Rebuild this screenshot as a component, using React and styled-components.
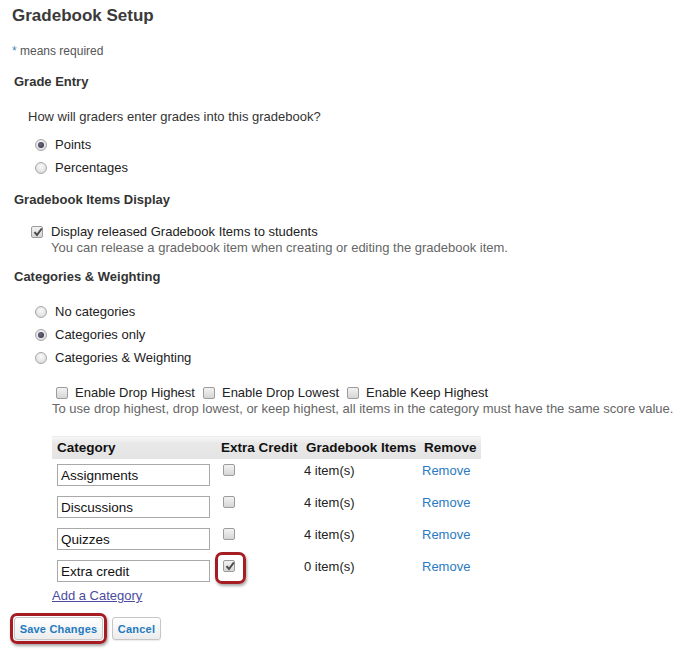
import React from "react";
import styled, { createGlobalStyle, css } from "styled-components";

const Global = createGlobalStyle`
  html, body { margin: 0; padding: 0; background: #fff; }
  body { font-family: "Liberation Sans", Arial, sans-serif; font-size: 13px; color: #222; }
`;

const Page = styled.div`
  width: 690px;
  height: 657px;
  padding: 6px 0 0 12px;
  box-sizing: border-box;
  overflow: hidden;
`;

const Title = styled.h1`
  margin: 0;
  font-size: 17px;
  line-height: 20px;
  font-weight: bold;
  color: #3a3a3a;
`;

const Required = styled.div`
  margin-top: 17px;
  font-size: 12px;
  line-height: 16px;
  color: #555;
`;

const Star = styled.span`
  color: #4a86b8;
`;

const SectionTitle = styled.h2`
  margin: ${(p) => p.$mt}px 0 0 2px;
  font-size: 13px;
  line-height: 16px;
  font-weight: bold;
  color: #333;
`;

const Prompt = styled.div`
  margin: 19px 0 0 16px;
  line-height: 16px;
  color: #333;
`;

const OptionList = styled.div`
  display: flex;
  flex-direction: column;
  gap: 7px;
  margin: ${(p) => p.$mt}px 0 0 23px;
`;

const OptionRow = styled.label`
  display: flex;
  align-items: center;
  gap: 8px;
  line-height: 16px;
  color: #222;
`;

const boxBase = css`
  display: inline-block;
  box-sizing: border-box;
  width: 12px;
  height: 12px;
  flex: none;
  border: 1px solid #9c9c9c;
  background: linear-gradient(#f2f2f2, #d6d6d6);
  position: relative;
`;

const RadioDot = styled.span`
  ${boxBase};
  border-radius: 50%;
  border-color: #a8a8a8;
  background: radial-gradient(circle at 50% 35%, #fafafa, #d4d4d4);
  &::after {
    content: "";
    display: ${(p) => (p.$on ? "block" : "none")};
    position: absolute;
    left: 2px;
    top: 2px;
    width: 6px;
    height: 6px;
    border-radius: 50%;
    background: radial-gradient(circle at 40% 40%, #6a6a80, #2d2d44);
  }
`;

const Box = styled.span`
  ${boxBase};
  border-radius: 2px;
  svg {
    position: absolute;
    left: 1px;
    top: 0px;
  }
`;

const Check = ({ on }) => (
  <Box>
    {on && (
      <svg width="10" height="10" viewBox="0 0 10 10">
        <path d="M1.5 5.2 L4 8 L8.8 1.5" fill="none" stroke="#4a4a4a" strokeWidth="2" />
      </svg>
    )}
  </Box>
);

const Radio = ({ on, children }) => (
  <OptionRow>
    <RadioDot $on={on} />
    <span>{children}</span>
  </OptionRow>
);

const DisplayBlock = styled.div`
  display: flex;
  align-items: flex-start;
  gap: 8px;
  margin: 16px 0 0 19px;
  line-height: 16px;
  & > span:first-child { margin-top: 2px; }
`;

const Hint = styled.div`
  color: #666;
  line-height: 16px;
`;

const DropBlock = styled.div`
  margin: 19px 0 0 40px;
  line-height: 16px;
`;

const DropRow = styled.div`
  display: flex;
  align-items: center;
  margin-left: 4px;
`;

const DropItem = styled.label`
  display: flex;
  align-items: center;
  gap: 7px;
  margin-right: 8px;
  color: #222;
`;

const Table = styled.div`
  margin: 19px 0 0 40px;
  width: 429px;
  display: grid;
  grid-template-columns: 167px 83px 118px 61px;
`;

const Head = styled.div`
  height: 22px;
  line-height: 22px;
  padding-left: ${(p) => p.$pl}px;
  font-weight: bold;
  font-size: 13.5px;
  color: #111;
  background: linear-gradient(#f6f6f6, #e8e8e8 30%, #e4e4e4);
  border-top: 1px solid #ececec;
  white-space: nowrap;
`;

const Cell = styled.div`
  height: 32px;
  box-sizing: border-box;
  padding: 5px 0 0 ${(p) => p.$pl}px;
  line-height: 14px;
  color: #222;
  white-space: nowrap;
`;

const TextInput = styled.div`
  box-sizing: border-box;
  width: 153px;
  height: 22px;
  border: 1px solid #a9a9a9;
  padding: 0 3px;
  line-height: 22px;
  font-size: 13.5px;
  color: #111;
`;

const Link = styled.a`
  color: ${(p) => p.$color};
  text-decoration: ${(p) => (p.$underline ? "underline" : "none")};
  cursor: pointer;
`;

const Ring = styled.span`
  position: relative;
  display: inline-block;
  &::after {
    content: "";
    position: absolute;
    left: -8px;
    top: -8px;
    right: -11px;
    bottom: -9px;
    border: 3px solid #a51d22;
    border-radius: 7px;
    box-shadow: 1px 2px 3px rgba(0, 0, 0, 0.35);
  }
`;

const AddLink = styled.div`
  margin: 1px 0 0 40px;
  line-height: 16px;
  font-size: 13px;
`;

const Actions = styled.div`
  display: flex;
  align-items: center;
  gap: 9px;
  margin: 13px 0 0 2px;
`;

const HighlightWrap = styled.div`
  padding: 1px;
  border: 3px solid #a51d22;
  border-radius: 7px;
  margin: -4px;
  box-shadow: 1px 2px 3px rgba(0, 0, 0, 0.35);
`;

const Button = styled.button`
  height: 23px;
  padding: 0 4px;
  font-family: "Liberation Sans", Arial, sans-serif;
  font-size: 11px;
  font-weight: bold;
  letter-spacing: 0.2px;
  color: #1f7ac0;
  background: linear-gradient(#ffffff, #ececec);
  border: 1px solid #c6c6c6;
  border-radius: 3px;
  box-shadow: 0 1px 1px rgba(0,0,0,0.08);
  width: ${(p) => p.$w}px;
`;

const rows = [
  { name: "Assignments", extra: false, items: 4 },
  { name: "Discussions", extra: false, items: 4 },
  { name: "Quizzes", extra: false, items: 4 },
  { name: "Extra credit", extra: true, items: 0 },
];

export default function App() {
  return (
    <>
      <Global />
      <Page>
        <Title>Gradebook Setup</Title>
        <Required>
          <Star>*</Star> means required
        </Required>

        <SectionTitle $mt={15}>Grade Entry</SectionTitle>
        <Prompt>How will graders enter grades into this gradebook?</Prompt>
        <OptionList $mt={12}>
          <Radio on>Points</Radio>
          <Radio>Percentages</Radio>
        </OptionList>

        <SectionTitle $mt={16}>Gradebook Items Display</SectionTitle>
        <DisplayBlock>
          <Check on />
          <div>
            <div>Display released Gradebook Items to students</div>
            <Hint>You can release a gradebook item when creating or editing the gradebook item.</Hint>
          </div>
        </DisplayBlock>

        <SectionTitle $mt={13}>Categories &amp; Weighting</SectionTitle>
        <OptionList $mt={19}>
          <Radio>No categories</Radio>
          <Radio on>Categories only</Radio>
          <Radio>Categories &amp; Weighting</Radio>
        </OptionList>

        <DropBlock>
          <DropRow>
            <DropItem><Check /><span>Enable Drop Highest</span></DropItem>
            <DropItem><Check /><span>Enable Drop Lowest</span></DropItem>
            <DropItem><Check /><span>Enable Keep Highest</span></DropItem>
          </DropRow>
          <Hint>To use drop highest, drop lowest, or keep highest, all items in the category must have the same score value.</Hint>
        </DropBlock>

        <Table>
          <Head $pl={5}>Category</Head>
          <Head $pl={2}>Extra Credit</Head>
          <Head $pl={4}>Gradebook Items</Head>
          <Head $pl={4}>Remove</Head>
          {rows.map((r) => (
            <React.Fragment key={r.name}>
              <Cell $pl={5}><TextInput>{r.name}</TextInput></Cell>
              <Cell $pl={4}>
                {r.extra ? (
                  <Ring><Check on /></Ring>
                ) : (
                  <Check />
                )}
              </Cell>
              <Cell $pl={2}>{r.items} item(s)</Cell>
              <Cell $pl={2}><Link $color="#2a7ac2">Remove</Link></Cell>
            </React.Fragment>
          ))}
        </Table>
        <AddLink><Link $color="#4b4ba0" $underline>Add a Category</Link></AddLink>

        <Actions>
          <HighlightWrap>
            <Button $w={89}>Save Changes</Button>
          </HighlightWrap>
          <Button $w={49}>Cancel</Button>
        </Actions>
      </Page>
    </>
  );
}
